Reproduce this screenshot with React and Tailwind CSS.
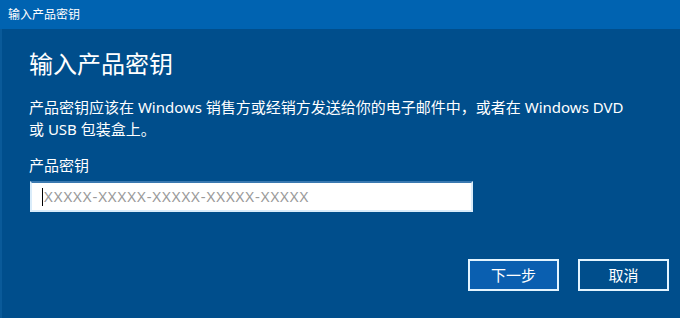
export default function App() {
  const font = { fontFamily: '"Noto Sans", "Noto Sans CJK SC", sans-serif' };
  return (
    <div
      className="w-[680px] h-[318px] bg-[#004e8c] flex flex-col overflow-hidden text-white"
      style={font}
    >
      {/* title bar */}
      <div className="h-[29px] bg-[#0063b1] flex items-center px-2 text-[12px] leading-none shrink-0">
        输入产品密钥
      </div>

      <div className="flex-1 flex flex-col border-l-2 border-[#0a5a99]">
        <div className="pl-[27px] pr-4">
          <h1 className="mt-[19px] text-[24px] leading-[32px] font-normal">输入产品密钥</h1>
          <p className="mt-[16px] text-[15px] leading-[22px] w-[605px]">
            产品密钥应该在 Windows 销售方或经销方发送给你的电子邮件中，或者在 Windows DVD 或 USB 包装盒上。
          </p>
          <div className="mt-[14px] text-[15px] leading-[22px]">产品密钥</div>
          <div className="mt-[5px] ml-[1px] w-[443px] h-[31px] bg-white border-2 border-[#d9ecfa] border-t-[#3a79b0] flex items-center pl-[10px]">
            <span className="w-px h-[18px] bg-black mr-[1px]" />
            <span className="text-[15px] text-[#9a9a9a] tracking-[0.9px]">
              XXXXX-XXXXX-XXXXX-XXXXX-XXXXX
            </span>
          </div>
        </div>

        <div className="flex justify-end gap-[19px] pr-[11px] mt-[47px]">
          <button className="w-[91px] h-[32px] border-2 border-[#e3f4ff] bg-[#0a5fb0] text-[15px] text-white">
            下一步
          </button>
          <button className="w-[91px] h-[32px] border-2 border-[#e3f4ff] bg-[#004e8c] text-[15px] text-white">
            取消
          </button>
        </div>
      </div>
    </div>
  );
}
